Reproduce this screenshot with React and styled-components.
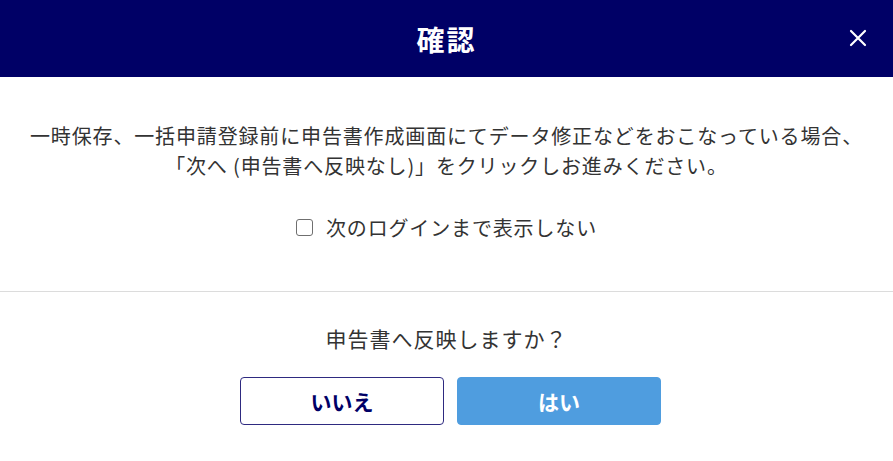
import React, { useState } from 'react';
import styled, { createGlobalStyle } from 'styled-components';

const GlobalStyle = createGlobalStyle`
  html, body {
    margin: 0;
    padding: 0;
    background: #fff;
  }
  body {
    font-family: "Noto Sans CJK JP", "Noto Sans", sans-serif;
    color: #333;
  }
`;

const Dialog = styled.div`
  width: 893px;
  height: 461px;
  display: flex;
  flex-direction: column;
  background: #fff;
`;

const Header = styled.div`
  height: 77px;
  background: #000066;
  display: flex;
  align-items: center;
  justify-content: center;
  position: relative;
`;

const Title = styled.h2`
  margin: 0;
  color: #fff;
  font-size: 28px;
  font-weight: 700;
  letter-spacing: 2px;
`;

const CloseBtn = styled.button`
  position: absolute;
  top: 27px;
  right: 24px;
  width: 22px;
  height: 22px;
  padding: 0;
  border: none;
  background: transparent;
  cursor: pointer;
  display: flex;
  align-items: center;
  justify-content: center;
`;

const Body = styled.div`
  padding: 44px 0 0;
  display: flex;
  flex-direction: column;
  align-items: center;
  height: 215px;
  box-sizing: border-box;
  border-bottom: 1px solid #dcdcdc;
`;

const Message = styled.p`
  margin: 0;
  text-align: center;
  font-size: 20px;
  line-height: 30px;
  letter-spacing: 0.85px;
  color: #333;
`;

const CheckLabel = styled.label`
  margin-top: 32px;
  display: flex;
  align-items: center;
  gap: 13px;
  font-size: 20px;
  letter-spacing: 0.85px;
  color: #333;
  cursor: pointer;
`;

const Box = styled.span`
  width: 17px;
  height: 17px;
  border: 1.5px solid #6f6f6f;
  border-radius: 3px;
  box-sizing: border-box;
  display: inline-block;
  background: ${p => (p.checked ? '#000066' : '#fff')};
`;

const Footer = styled.div`
  display: flex;
  flex-direction: column;
  align-items: center;
  padding-top: 31px;
`;

const Question = styled.p`
  margin: 0;
  font-size: 21px;
  line-height: 30px;
  letter-spacing: 1px;
  color: #333;
`;

const ButtonRow = styled.div`
  margin-top: 24px;
  margin-left: 8px;
  display: flex;
  gap: 13px;
`;

const Button = styled.button`
  width: 204px;
  height: 48px;
  border-radius: 4px;
  font-family: inherit;
  font-size: 21px;
  font-weight: 700;
  cursor: pointer;
  border: 1px solid ${p => (p.primary ? '#4f9ddf' : '#2e2a80')};
  background: ${p => (p.primary ? '#4f9ddf' : '#fff')};
  color: ${p => (p.primary ? '#fff' : '#000066')};
`;

export default function App() {
  const [checked, setChecked] = useState(false);
  return (
    <>
      <GlobalStyle />
      <Dialog>
        <Header>
          <Title>確認</Title>
          <CloseBtn aria-label="close">
            <svg width="18" height="18" viewBox="0 0 18 18">
              <path d="M2 2L16 16M16 2L2 16" stroke="#fff" strokeWidth="2.2" strokeLinecap="round" />
            </svg>
          </CloseBtn>
        </Header>
        <Body>
          <Message>
            一時保存、一括申請登録前に申告書作成画面にてデータ修正などをおこなっている場合、
            <br />
            「次へ (申告書へ反映なし)」をクリックしお進みください。
          </Message>
          <CheckLabel onClick={() => setChecked(!checked)}>
            <Box checked={checked} />
            次のログインまで表示しない
          </CheckLabel>
        </Body>
        <Footer>
          <Question>申告書へ反映しますか？</Question>
          <ButtonRow>
            <Button>いいえ</Button>
            <Button primary>はい</Button>
          </ButtonRow>
        </Footer>
      </Dialog>
    </>
  );
}
